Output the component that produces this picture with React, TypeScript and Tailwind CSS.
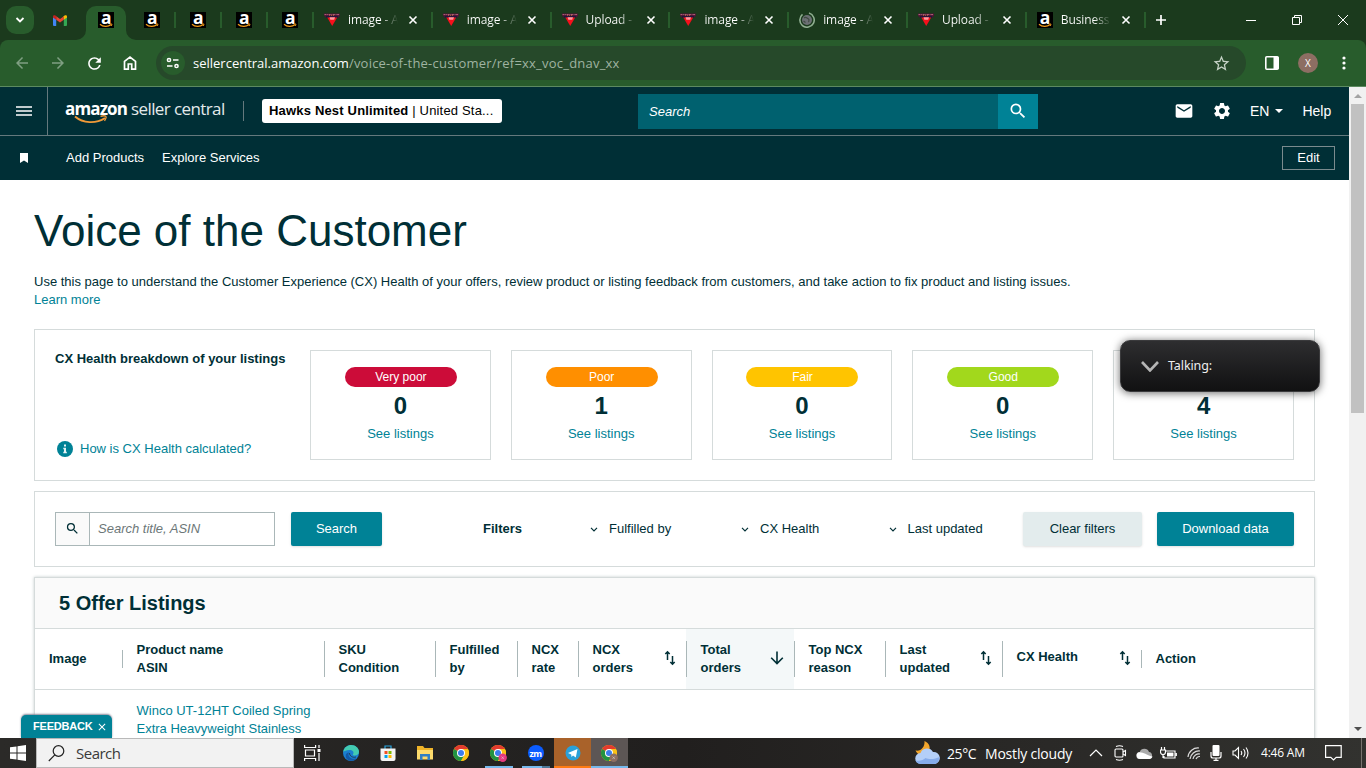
import React from "react";
import {
  MdArrowBack,
  MdArrowForward,
  MdRefresh,
  MdStarBorder,
  MdEmail,
  MdSettings,
  MdSearch,
  MdClose,
} from "react-icons/md";

const UI = "font-['Open_Sans','Noto_Sans',sans-serif]";

function AmazonIcon() {
  return (
    <div className="relative h-4 w-4 shrink-0 bg-black">
      <span className="absolute left-[3px] top-[-3px] font-['Open_Sans',sans-serif] text-[17.500px] font-bold leading-[16px] text-white">
        a
      </span>
      <svg className="absolute inset-0" width="16" height="16" viewBox="0 0 16 16" fill="none">
        <path d="M2 12.2 C5 15 10 15 13 12.8" stroke="#f09a1a" strokeWidth="1.2" />
        <path d="M11.6 12.1 L14 12 L13.4 14" stroke="#f09a1a" strokeWidth="0.9" />
      </svg>
    </div>
  );
}

function GemIcon() {
  return (
    <svg className="shrink-0" width="16" height="16" viewBox="0 0 16 16">
      <path d="M0 1.500h16v2l-1.500 2H1.500L0 3.500z" fill="#4a1533" />
      <path d="M.5 2.600h15" stroke="#b5657c" strokeWidth="1" strokeDasharray="2 .7 1 .5" />
      <path d="M5 3.400h6" stroke="#d07a3c" strokeWidth=".7" strokeDasharray="1 1" />
      <path d="M2 4.900h12" stroke="#1f1440" strokeWidth="1.500" />
      <path d="M3.300 5.600h9.900L8.200 14z" fill="#f5101c" />
      <path d="M5.500 5.200h5.500l-.8 2.600H6.300z" fill="#ff9aa0" />
    </svg>
  );
}

function LoadingIcon() {
  return (
    <svg className="shrink-0" width="16" height="16" viewBox="0 0 16 16">
      <circle cx="8" cy="8" r="5" fill="#6b6f73" />
      <path d="M5 6c1.500-1.500 3 0 4.500 1s-.5 2 .5 3M4.500 9l2 1.500" stroke="#3f4a40" strokeWidth="1.200" fill="none" />
      <path d="M10 1.100a7.200 7.200 0 1 1-6.500 1.300" stroke="#8fae90" strokeWidth="1.600" fill="none" />
    </svg>
  );
}

function TextTab({ label, icon }: { label: string; icon: React.ReactNode }) {
  return (
    <div className="flex h-4 w-[118.8px] shrink-0 items-center border-r-2 border-[#285c2c] pl-[10px]">
      {icon}
      <div className="ml-2 w-[50px] whitespace-nowrap bg-linear-to-r from-white from-65% to-transparent bg-clip-text text-[12px] font-medium leading-[18px] tracking-[-0.1px] text-transparent">
        {label}
      </div>
      <svg className="ml-[10px]" width="10" height="10" viewBox="0 0 10 10">
        <path d="M1.500 1.500l7 7M8.500 1.500l-7 7" stroke="#fff" strokeWidth="1.600" />
      </svg>
    </div>
  );
}

function TabStrip() {
  return (
    <div className="flex h-10 items-center bg-[#1b3a1d] pl-[6px]">
      <div className="flex h-7 w-7 items-center justify-center rounded-[10px] bg-[#285c2c]">
        <svg width="10" height="10" viewBox="0 0 10 10" fill="none">
          <path d="M1.500 3l3.500 3.500L8.500 3" stroke="#fff" strokeWidth="1.800" />
        </svg>
      </div>
      <div className="flex w-[52px] justify-center">
        <svg width="14" height="11" viewBox="0 0 14 11">
          <path d="M0 1.500V10a1 1 0 0 0 1 1h2.200V4.600z" fill="#4285f4" />
          <path d="M14 1.500V10a1 1 0 0 1-1 1h-2.200V4.600z" fill="#34a853" />
          <path d="M3.200 1.200L7 4l3.800-2.800V4.800L7 7.600 3.200 4.800z" fill="#ea4335" />
          <path d="M0 1.500C0 .2 1.500-.2 2.500.6l.7.600v3.600L0 2.400z" fill="#c5221f" />
          <path d="M14 1.500c0-1.300-1.500-1.700-2.500-.9l-.7.600v3.600L14 2.400z" fill="#fbbc04" />
        </svg>
      </div>
      <div className="relative flex h-[34px] w-10 justify-center self-end rounded-t-[10px] bg-[#285c2c] pt-[6px]">
        <AmazonIcon />
        <svg className="absolute bottom-0 -left-[10px]" width="10" height="10">
          <path d="M10 0v10H0A10 10 0 0 0 10 0z" fill="#285c2c" />
        </svg>
        <svg className="absolute -right-[10px] bottom-0" width="10" height="10">
          <path d="M0 0v10h10A10 10 0 0 1 0 0z" fill="#285c2c" />
        </svg>
      </div>
      <div className="ml-1 flex">
        {[0, 1, 2, 3].map((i) => (
          <div key={i} className="flex h-4 w-[46px] justify-center border-r-2 border-[#285c2c]">
            <AmazonIcon />
          </div>
        ))}
      </div>
      <TextTab label="image - A" icon={<GemIcon />} />
      <TextTab label="image - A" icon={<GemIcon />} />
      <TextTab label="Upload -" icon={<GemIcon />} />
      <TextTab label="image - A" icon={<GemIcon />} />
      <TextTab label="image - A" icon={<LoadingIcon />} />
      <TextTab label="Upload -" icon={<GemIcon />} />
      <TextTab label="Business" icon={<AmazonIcon />} />
      <svg className="ml-[10px]" width="10" height="10" viewBox="0 0 10 10">
        <path d="M5 0v10M0 5h10" stroke="#fff" strokeWidth="1.700" />
      </svg>
      <div className="ml-auto flex items-center gap-9 pr-[18px]">
        <svg width="10" height="10" viewBox="0 0 10 10">
          <path d="M0 5.500h10" stroke="#fff" />
        </svg>
        <svg width="10" height="10" viewBox="0 0 10 10" fill="none" stroke="#fff">
          <path d="M.5 2.500h7v7h-7zM2.500 2.500v-2h7v7h-2" />
        </svg>
        <svg width="10" height="10" viewBox="0 0 10 10" stroke="#fff">
          <path d="M0 0l10 10M10 0L0 10" />
        </svg>
      </div>
    </div>
  );
}

function Toolbar() {
  return (
    <div className="h-[47px] bg-[#1b3a1d]">
      <div className="flex h-[47px] items-center rounded-t-lg border-b border-[#5c8a60] bg-[#285c2c] pl-[13px] text-white">
        <MdArrowBack size={18} className="text-[#7f9f82]" />
        <MdArrowForward size={18} className="ml-[18px] text-[#7f9f82]" />
        <MdRefresh size={19} className="ml-[18px]" />
        <svg className="ml-[18px]" width="16" height="16" viewBox="0 0 16 16" fill="none">
          <path d="M2.500 14.200V6.300L8 2l5.500 4.300v7.900H9.700V9H6.300v5.200z" stroke="#fff" strokeWidth="1.700" />
        </svg>
        <div className="ml-[18px] flex h-[34px] w-[1090px] items-center rounded-full bg-[#26492a] pl-[5px]">
          <div className="flex h-6 w-6 items-center justify-center rounded-full bg-[#285c2c]">
            <svg width="14" height="12" viewBox="0 0 14 12" fill="none" stroke="#fff" strokeWidth="1.500">
              <circle cx="3" cy="3" r="1.600" />
              <path d="M7 3h5.500M1 9h5.500" />
              <circle cx="10.500" cy="9" r="1.600" />
            </svg>
          </div>
          <div className={`ml-2 whitespace-nowrap pt-px text-[13px] tracking-[0.22px] text-[#9fb3a1] ${UI}`}>
            <span className="tracking-[0px] text-white">sellercentral.amazon.com</span>/voice-of-the-customer/ref=xx_voc_dnav_xx
          </div>
          <MdStarBorder size={19} className="ml-auto mr-[15px] text-[#c5d2c6]" />
        </div>
        <svg className="ml-[19px]" width="14" height="14" viewBox="0 0 14 14">
          <rect x=".8" y=".8" width="12.400" height="12.400" rx="1" fill="none" stroke="#fff" strokeWidth="1.600" />
          <path d="M8.500 1h5v12h-5z" fill="#fff" />
        </svg>
        <div className="ml-[19px] flex h-5 w-5 items-center justify-center rounded-full bg-[#8d6e63] font-['Open_Sans',sans-serif] text-[10px]">
          X
        </div>
        <svg className="ml-6" width="4" height="14" viewBox="0 0 4 14" fill="#fff">
          <circle cx="2" cy="2" r="1.600" />
          <circle cx="2" cy="7" r="1.600" />
          <circle cx="2" cy="12" r="1.600" />
        </svg>
      </div>
    </div>
  );
}

function Header() {
  return (
    <header className="bg-[#002f36] text-white">
      <div className="flex h-[49px] items-center border-b border-[#64797d]">
        <div className="flex h-12 w-12 items-center justify-center border-r border-[#64797d]">
          <svg width="16" height="10" viewBox="0 0 16 10">
            <path d="M0 1h16M0 5h16M0 9h16" stroke="#fff" strokeWidth="1.600" />
          </svg>
        </div>
        <div className="relative ml-[17px] flex h-12 w-[160px] items-center whitespace-nowrap font-['Open_Sans',sans-serif] text-[17px]">
          <span className="w-[66px] pb-1 font-bold tracking-[-0.85px]">amazon</span>
          <span className="pb-1 tracking-[-0.6px] text-[#e4eaeb]">seller central</span>
          <svg className="absolute left-[9px] top-[27px]" width="34" height="12" viewBox="0 0 34 12" fill="none">
            <path d="M1 2.500C9 9.500 22 10 31 4" stroke="#f19a38" strokeWidth="1.900" />
            <path d="M26.500 2.300c2.500-.7 4.500-.6 5.200 0s.2 2.600-1.200 4.500" stroke="#f19a38" strokeWidth="1.300" />
          </svg>
        </div>
        <div className="ml-[18px] h-5 w-px bg-[#64797d]" />
        <div className="ml-[18px] h-6 w-[240px] whitespace-nowrap rounded-[3px] bg-white pl-[7px] text-[13px] leading-6 text-black">
          <b className="tracking-[0.18px]">Hawks Nest Unlimited</b>
          <span className="tracking-[0.18px]"> | United Sta...</span>
        </div>
        <div className="ml-[136px] h-[35px] w-[360px] bg-[#00616f] pl-[11px] text-[13px] italic leading-[35px] text-white">
          Search
        </div>
        <div className="flex h-[35px] w-10 items-center justify-center bg-[#008296]">
          <MdSearch size={20} />
        </div>
        <MdEmail size={20} className="ml-[136px]" />
        <MdSettings size={20} className="ml-[18px]" />
        <span className="ml-[18px] text-[14px]">EN</span>
        <svg className="ml-[6px]" width="8" height="4">
          <path d="M0 0h8L4 4z" fill="#fff" />
        </svg>
        <span className="ml-[19px] text-[14px]">Help</span>
      </div>
      <nav className="flex h-11 items-center pl-[20px] pr-[14px] text-[13px]">
        <svg width="8" height="10" viewBox="0 0 8 10">
          <path d="M0 0h8v10L4 7.500 0 10z" fill="#fff" />
        </svg>
        <span className="ml-[38px]">Add Products</span>
        <span className="ml-[18px]">Explore Services</span>
        <span className="ml-auto flex h-6 w-[53px] items-center justify-center border border-[#7b8b8e]">Edit</span>
      </nav>
    </header>
  );
}

const ratings = [
  { name: "Very poor", count: 0, color: "bg-[#cc0c39]" },
  { name: "Poor", count: 1, color: "bg-[#ff8f00]" },
  { name: "Fair", count: 0, color: "bg-[#ffc400]" },
  { name: "Good", count: 0, color: "bg-[#a2d81c]" },
  { name: "", count: 4, color: "bg-[#4f9a1c]" },
];

function HealthBox() {
  return (
    <section className="mt-5 flex h-[152px] border border-[#d5dbdb] px-5 pt-5 text-[13px]">
      <div className="flex w-[255px] flex-col">
        <b className="whitespace-nowrap leading-[18px]">CX Health breakdown of your listings</b>
        <div className="mt-[72px] flex h-[18px] items-center whitespace-nowrap pl-[2px] text-[#008296]">
          <svg width="16" height="16" viewBox="0 0 16 16">
            <circle cx="8" cy="8" r="8" fill="#008296" />
            <path d="M7 3.500h2v2H7zM6.300 6.800H9v4h.8v1.400H6.300v-1.400H7V8.200h-.7z" fill="#e6f3f5" />
          </svg>
          <span className="ml-[7px]">How is CX Health calculated?</span>
        </div>
      </div>
      <div className="grid flex-1 grid-cols-5 gap-5">
        {ratings.map((r) => (
          <div key={r.color} className="flex h-[110px] flex-col items-center border border-[#d5dbdb] pt-4">
            <div className={`ml-px h-5 w-28 rounded-full text-center text-[12px] font-medium leading-5 text-white ${r.color}`}>
              {r.name}
            </div>
            <b className="mt-[5px] text-[24px] leading-[28px]">{r.count}</b>
            <span className="mt-[5px] leading-[18px] text-[#008296]">See listings</span>
          </div>
        ))}
      </div>
    </section>
  );
}

function Down() {
  return (
    <svg className="mr-[11px]" width="8" height="5" viewBox="0 0 8 5" fill="none">
      <path d="M1 .8l3 3 3-3" stroke="#002f36" strokeWidth="1.200" />
    </svg>
  );
}

function Filters() {
  return (
    <section className="mt-[10px] flex h-[76px] items-center whitespace-nowrap border border-[#d5dbdb] pl-5 text-[13px]">
      <div className="flex h-[34px] w-[220px] items-center border border-[#aab7b8]">
        <div className="flex h-8 w-[34px] items-center justify-center border-r border-[#aab7b8] bg-[#fafafa] pb-[2px]">
          <MdSearch size={15} />
        </div>
        <span className="pl-2 italic text-[#6c7778]">Search title, ASIN</span>
      </div>
      <div className="ml-4 flex h-[34px] w-[91px] items-center justify-center rounded-xs bg-[#008296] text-white shadow-sm">
        Search
      </div>
      <b className="ml-[101px] w-[107px]">Filters</b>
      <div className="flex w-[151px] items-center"><Down />Fulfilled by</div>
      <div className="flex w-[147.500px] items-center"><Down />CX Health</div>
      <div className="flex w-[134.500px] items-center"><Down />Last updated</div>
      <div className="flex h-[34px] w-[119px] items-center justify-center rounded-xs bg-[#e3eced] shadow-sm">
        Clear filters
      </div>
      <div className="ml-[15px] flex h-[34px] w-[137px] items-center justify-center rounded-xs bg-[#008296] text-white shadow-sm">
        Download data
      </div>
    </section>
  );
}

function SortIcon() {
  return (
    <svg className="mb-[2px] mr-[10px]" width="12" height="16" viewBox="0 0 12 16" fill="none" stroke="#002f36" strokeWidth="1.500">
      <path d="M3.500 10V2M1.300 4L3.500 1.800 5.700 4M8.500 6v8M6.300 12L8.500 14.200l2.200-2.200" />
    </svg>
  );
}

function Col({
  a, b, w, short, sort, shade,
}: { a: string; b?: string; w: string; short?: boolean; sort?: React.ReactNode; shade?: boolean }) {
  return (
    <div className={`flex h-[60px] shrink-0 items-center ${w} ${shade ? "bg-[#f4f8f9]" : ""}`}>
      <div className={`w-px shrink-0 bg-[#aab7b8] ${short ? "h-[18px]" : "h-9"}`} />
      <div className={`ml-[13.500px] flex-1 whitespace-nowrap leading-[18px] ${sort && !b ? "pb-1" : ""}`}>
        {a}
        {b && <br />}
        {b}
      </div>
      {sort}
    </div>
  );
}

function Listings() {
  return (
    <section className="mt-[10px] flex-1 border border-[#d5dbdb] shadow-[0_0_3px_#c5cccc]">
      <h2 className="h-[51px] border-b border-[#d5dbdb] bg-[#fafafa] pl-6 text-[20px] font-bold leading-[50px]">
        5 Offer Listings
      </h2>
      <div className="flex h-[61px] border-b border-[#d5dbdb] text-[13px] font-bold">
        <div className="flex w-[87px] items-center pl-[14px]">Image</div>
        <Col a="Product name" b="ASIN" w="w-[202px]" short />
        <Col a="SKU" b="Condition" w="w-[111px]" />
        <Col a="Fulfilled" b="by" w="w-[82px]" />
        <Col a="NCX" b="rate" w="w-[61px]" />
        <Col a="NCX" b="orders" w="w-[108px]" sort={<SortIcon />} />
        <Col
          a="Total" b="orders" w="w-[108px]" shade
          sort={
            <svg className="mb-[2px] mr-[10px]" width="14" height="14" viewBox="0 0 14 14" fill="none" stroke="#002f36" strokeWidth="1.600">
              <path d="M7 .5v12M1.200 6.800L7 12.600l5.800-5.800" />
            </svg>
          }
        />
        <Col a="Top NCX" b="reason" w="w-[91px]" />
        <Col a="Last" b="updated" w="w-[117px]" sort={<SortIcon />} />
        <Col a="CX Health" w="w-[139px]" sort={<SortIcon />} />
        <Col a="Action" w="w-[160px]" short />
      </div>
      <div className="pl-[101.500px] pt-3 text-[13px] leading-[18px] text-[#008296]">
        Winco UT-12HT Coiled Spring
        <br />
        Extra Heavyweight Stainless
      </div>
    </section>
  );
}

function Scrollbar() {
  return (
    <div className="flex w-[17px] flex-col items-center bg-[#f1f1f1]">
      <svg className="mt-[7px]" width="8" height="4"><path d="M0 4h8L4 0z" fill="#a3a3a3" /></svg>
      <div className="mt-[6px] h-[309px] w-[13px] bg-[#c1c1c1]" />
      <svg className="mb-[7px] mt-auto" width="8" height="4"><path d="M0 0h8L4 4z" fill="#505050" /></svg>
    </div>
  );
}

function Chrome({ badge }: { badge?: string }) {
  return (
    <svg width="17" height="17" viewBox="0 0 17 17">
      <circle cx="8" cy="8" r="8" fill="#fbc116" />
      <path d="M8 8L1.070 4A8 8 0 0 1 14.930 4z" fill="#e33b2e" />
      <path d="M8 8L1.070 4A8 8 0 0 0 8 16l3.500-6z" fill="#229342" />
      <path d="M8 4h6.930A8 8 0 0 1 8 16l3.500-6z" fill="#fbc116" />
      <circle cx="8" cy="8" r="4" fill="#fff" />
      <circle cx="8" cy="8" r="3" fill="#3b7ded" />
      {badge && <circle cx="12.700" cy="12.700" r="4.200" fill={badge} />}
      {badge && <path d="M11.500 11.500l2.400 2.400M13.900 11.500l-2.400 2.400" stroke="#fff" strokeWidth=".6" opacity=".7" />}
    </svg>
  );
}

function Slot({ children, cls, bar }: { children: React.ReactNode; cls?: string; bar?: string }) {
  return (
    <div className={`flex h-full w-[37px] shrink-0 flex-col items-center ${cls ?? ""}`}>
      <div className="flex h-7 items-center justify-center pt-[2px]">{children}</div>
      {bar && <div className={`h-[2px] ${bar}`} />}
    </div>
  );
}

function Taskbar() {
  return (
    <footer className={`flex h-[30px] shrink-0 items-center whitespace-nowrap bg-linear-to-r from-[#2b2a28] via-[#211f1e] to-[#32322f] text-white ${UI}`}>
      <div className="flex w-9 justify-center">
        <svg width="16" height="16" viewBox="0 0 16 16" fill="#fff">
          <path d="M0 2.300L6.500 1.400v6H0zM7.500 1.200L16 0v7.400H7.500zM0 8.500h6.500v6L0 13.700zM7.500 8.500H16V16l-8.500-1.200z" />
        </svg>
      </div>
      <div className="flex h-[30px] w-[258px] items-center border border-[#b9b9b9] bg-[#f2f2f2] pl-[11px] text-[#3a3a3a]">
        <svg width="17" height="17" viewBox="0 0 17 17" fill="none" stroke="#222" strokeWidth="1.200">
          <circle cx="10.500" cy="6" r="5.300" />
          <path d="M6.800 9.800L.8 16" />
        </svg>
        <span className="ml-[11px] text-[15px] tracking-[-0.5px]">Search</span>
      </div>
      <Slot>
        <svg width="17" height="16" viewBox="0 0 17 16" fill="none" stroke="#fff" strokeWidth="1.200">
          <path d="M.6 0v2.500h11V0M.6 16v-2.500h11V16M1.500 5h9v6h-9zM15 0v3M15 8v8" />
          <path d="M13.500 4h3v3h-3z" fill="#fff" stroke="none" />
        </svg>
      </Slot>
      <Slot cls="ml-px">
        <svg width="16" height="16" viewBox="0 0 16 16">
          <circle cx="8" cy="8" r="8" fill="#1b7fd0" />
          <path d="M.3 7C1 2 5 0 8 0c5 0 8 3.500 8 6.800 0 2.500-2 3.700-4.300 3.700-1.500 0-2.200-.7-1.700-1.300C11.500 7 9.500 5 6.500 5 3.500 5 1 6 .3 7z" fill="#43cbb0" />
          <path d="M6 7.500C4 11 8 15 13.500 13.300 11 16.500 6.500 16.500 3.800 14 1.500 11 3 7.500 6 7.500z" fill="#1259a8" />
          <path d="M6.500 8c0 3 3 5 6.500 4" stroke="#222" strokeWidth=".7" fill="none" />
        </svg>
      </Slot>
      <Slot>
        <svg width="16" height="16" viewBox="0 0 16 16">
          <path d="M5 4V1h6v3" fill="none" stroke="#2aa5e0" strokeWidth="1.200" />
          <path d="M.5 3.500h15V14a2 2 0 0 1-2 2h-11a2 2 0 0 1-2-2z" fill="#f3f3f3" />
          <path d="M4.500 6h3v3h-3z" fill="#f25022" />
          <path d="M8.500 6h3v3h-3z" fill="#7fba00" />
          <path d="M4.500 10h3v3h-3z" fill="#00a4ef" />
          <path d="M8.500 10h3v3h-3z" fill="#ffb900" />
        </svg>
      </Slot>
      <Slot>
        <svg width="16" height="14" viewBox="0 0 16 14">
          <path d="M0 0h6l1.500 2H16v11H0z" fill="#f0b429" />
          <path d="M0 4h16v9.500H0z" fill="#fddb6c" />
          <path d="M3 8h10v6h-2.500v-3.500h-5V14H3z" fill="#2f7fc4" />
        </svg>
      </Slot>
      <Slot><Chrome /></Slot>
      <Slot bar="w-7 bg-[#76b9ed]"><Chrome badge="#e5397f" /></Slot>
      <Slot bar="w-7 border-r-8 border-[#4d7898] bg-[#76b9ed]">
        <div className="flex h-4 w-4 items-center justify-center rounded-full bg-[#0b5cff] text-[9px] font-bold leading-none tracking-[-0.5px]">
          zm
        </div>
      </Slot>
      <Slot cls="bg-[#a9622a]" bar="w-full bg-[#ff7a12]">
        <svg width="16" height="16" viewBox="0 0 16 16">
          <circle cx="8" cy="8" r="7.500" fill="#2ba0d8" />
          <path d="M3 8l9.500-4-1.700 8.500L8 10.500 6.500 12l-.3-2.500z" fill="#fff" />
        </svg>
      </Slot>
      <Slot cls="bg-[#5d5655]" bar="w-full bg-[#76b9ed]"><Chrome badge="#8d6e63" /></Slot>

      <div className="ml-auto flex items-center">
        <svg width="25" height="24" viewBox="0 0 25 24">
          <path d="M9.500 0c5 2 6.500 7 4 11L6 14C4 14 1.500 12 .5 9.500 6 10.500 10 6 9.500 0z" fill="#f2a52b" />
          <path d="M6 23a5.500 5.500 0 0 1-.5-11 7 7 0 0 1 12.500-1 6 6 0 0 1 1.500 12z" fill="#b4cff8" />
          <path d="M6 23c-3 0-5-1.500-5.500-4 3 2 8 0 10-2 4 2 10 1 14-1-.5 5-3 7-5 7z" fill="#86aceb" />
        </svg>
        <span className="ml-[7px] w-[38px] text-[14px] tracking-[-0.4px]">25°C</span>
        <span className="w-[104px] text-[14px] tracking-[-0.2px]">Mostly cloudy</span>
        <svg width="14" height="8" viewBox="0 0 14 8" fill="none" stroke="#fff" strokeWidth="1.200">
          <path d="M1 7l6-6 6 6" />
        </svg>
        <svg className="ml-[11px]" width="13" height="16" viewBox="0 0 13 16" fill="none" stroke="#fff" strokeWidth="1.100">
          <rect x="1" y="4" width="8" height="8" rx="1" />
          <path d="M9 7l2.500-1.500v5L9 9M2 1.500q3.500-1.500 7 0M2 14.500q3.500 1.500 7 0" />
        </svg>
        <svg className="ml-[9px]" width="17" height="11" viewBox="0 0 17 11">
          <path d="M4 11a3.500 3.500 0 0 1-.3-7A5 5 0 0 1 13 4a3.600 3.600 0 0 1 .5 7z" fill="#aaa" />
          <path d="M4 11a3.500 3.500 0 0 1-1-6.800C8 4 10 7 16.500 8.500 16 10 15 11 13.500 11z" fill="#fff" />
        </svg>
        <svg className="ml-[7px]" width="17" height="13" viewBox="0 0 17 13" fill="none" stroke="#fff" strokeWidth="1.200">
          <path d="M6 4h9v7H4V9M16.300 6v3M1.500 0v3M4.500 0v3M.5 3h5v2a2.500 2.500 0 0 1-5 0zM3 7v4" />
          <path d="M7 5.500h6.500v4H7z" fill="#fff" stroke="none" />
        </svg>
        <svg className="ml-[10px]" width="14" height="14" viewBox="0 0 14 14" fill="none" stroke="#ddd" strokeWidth="1.200">
          <path d="M1 11A10 10 0 0 1 12 2M3 13A9 9 0 0 1 13 5M6 13a6 6 0 0 1 7-5M9 13a4 4 0 0 1 4-2.500" />
        </svg>
        <svg className="ml-[9px]" width="12" height="16" viewBox="0 0 12 16" fill="none" stroke="#fff" strokeWidth="1.200">
          <rect x="2.500" y="0" width="7" height="11" rx="1" fill="#fff" stroke="none" />
          <path d="M1 7v4q0 2 2 2h6q2 0 2-2V7M6 13v2.500M3.500 15.400h5" />
        </svg>
        <svg className="ml-[10px]" width="17" height="14" viewBox="0 0 17 14" fill="none" stroke="#fff" strokeWidth="1.100">
          <path d="M1 5h2l3.500-3.500v11L3 9H1zM9 5q1.500 2 0 4M11.500 3q3 4 0 8M14 1.500q4 5.500 0 11" />
        </svg>
        <span className="ml-3 w-[64px] text-[12px] tracking-[-0.2px]">4:46 AM</span>
        <svg width="17" height="16" viewBox="0 0 17 16" fill="none" stroke="#fff" strokeWidth="1.200">
          <path d="M.6.6h15.600v11.800h-5L8.500 15l-2.700-2.600H.6z" />
        </svg>
        <div className="ml-[19px] mr-1 h-[30px] w-px bg-[#77736f]" />
      </div>
    </footer>
  );
}

export default function App() {
  return (
    <div className="relative flex h-[768px] w-[1366px] flex-col overflow-hidden bg-white font-['Liberation_Sans',Arial,sans-serif] text-[#002f36]">
      <div className={UI}>
        <TabStrip />
      </div>
      <Toolbar />
      <div className="flex h-[651px]">
        <div className="flex w-[1349px] flex-col overflow-hidden">
          <Header />
          <main className="flex flex-1 flex-col pl-[34px] pr-[34px]">
            <h1 className="mt-[25px] text-[44px] leading-[52px]">Voice of the Customer</h1>
            <p className="mt-[16px] whitespace-nowrap text-[13px] leading-[18px]">
              Use this page to understand the Customer Experience (CX) Health of your offers, review product or listing
              feedback from customers, and take action to fix product and listing issues.
              <br />
              <span className="text-[#008296]">Learn more</span>
            </p>
            <HealthBox />
            <Filters />
            <Listings />
          </main>
        </div>
        <Scrollbar />
      </div>
      <Taskbar />
      <div className="absolute left-[1120px] top-[340px] flex h-[52px] w-[200px] items-center rounded-[10px] border border-[#3a3a3c] bg-linear-to-b from-[#2e2e30] to-[#111112] pl-5 shadow-[0_1px_8px_rgba(0,0,0,0.6)]">
        <svg width="18" height="11" viewBox="0 0 18 11" fill="none">
          <path d="M1 1l8 8.500L17 1" stroke="#b5b5b5" strokeWidth="2.600" />
        </svg>
        <span className="ml-[9px] font-['Noto_Sans',sans-serif] text-[12.500px] tracking-[-0.1px] text-[#eee]">Talking:</span>
      </div>
      <div className="absolute left-[21px] top-[715px] flex h-[23px] w-[91px] items-center rounded-t-[5px] bg-[#008296] pl-3 text-[11px] font-bold text-white shadow-[0_-1px_2px_#889]">
        <span className="tracking-[-0.2px]">FEEDBACK</span>
        <MdClose size={12} className="ml-[3px]" />
      </div>
    </div>
  );
}
